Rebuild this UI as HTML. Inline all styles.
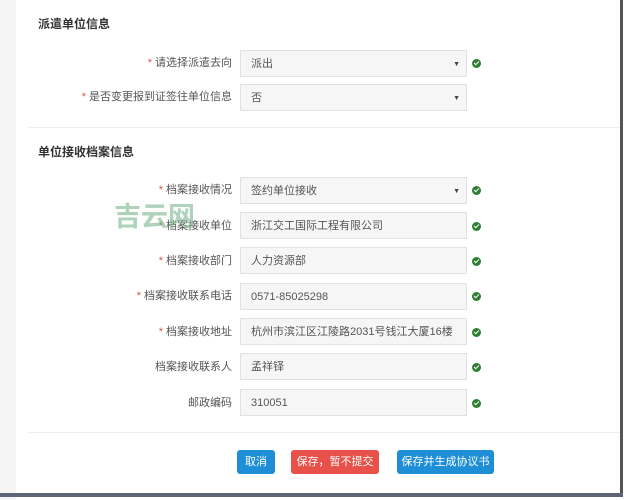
<!DOCTYPE html>
<html><head><meta charset="utf-8"><style>
body{margin:0;width:626px;height:500px;background:#fff;font-family:"Liberation Sans","Noto Sans CJK SC",sans-serif;position:relative;overflow:hidden}
.a{position:absolute}
.lbl{position:absolute;right:394px;font-size:11px;color:#555;line-height:28px;white-space:nowrap}
.lbl i{color:#d9534f;font-style:normal;margin-right:3px}
.inp{position:absolute;left:240px;height:27px;border:1px solid #e2e2e2;background:#f6f6f6;font-size:11px;color:#555;line-height:27px;padding-left:10px;box-sizing:border-box;width:227px}
.inp b{position:absolute;right:6px;top:0;font-size:7px;color:#444;font-weight:normal}
.ok{position:absolute;left:472px;width:9px;height:9px;border-radius:50%;background:#2e7d32}
.ok:after{content:"";position:absolute;left:2px;top:2px;width:4px;height:2px;border-left:1.5px solid #fff;border-bottom:1.5px solid #fff;transform:rotate(-45deg)}
h3{position:absolute;left:38px;margin:0;font-size:12px;font-weight:bold;color:#333}
.btn{position:absolute;top:450px;height:24px;line-height:24px;color:#fff;font-size:11px;text-align:center;border-radius:3px}
</style></head><body>
<div class="a" style="left:0;top:0;width:16px;height:500px;background:#f5f5f5"></div>
<div class="a" style="left:620px;top:0;width:3px;height:497px;background:#555"></div>
<div class="a" style="left:0;top:493px;width:623px;height:4px;background:#5d6676"></div>
<h3 style="top:15px">派遣单位信息</h3>
<h3 style="top:143px">单位接收档案信息</h3>
<div class="a" style="left:28px;top:127px;width:592px;height:1px;background:#eee"></div>
<div class="a" style="left:28px;top:432px;width:592px;height:1px;background:#eee"></div>

<div class="lbl" style="top:49px"><i>*</i>请选择派遣去向</div>
<div class="inp" style="top:50px">派出<b>▼</b></div><div class="ok" style="top:59px"></div>
<div class="lbl" style="top:83px"><i>*</i>是否变更报到证签往单位信息</div>
<div class="inp" style="top:84px">否<b>▼</b></div>

<div class="lbl" style="top:176px"><i>*</i>档案接收情况</div>
<div class="inp" style="top:177px">签约单位接收<b>▼</b></div><div class="ok" style="top:186px"></div>
<div class="lbl" style="top:212px"><i>*</i>档案接收单位</div>
<div class="inp" style="top:212px">浙江交工国际工程有限公司</div><div class="ok" style="top:222px"></div>
<div class="lbl" style="top:247px"><i>*</i>档案接收部门</div>
<div class="inp" style="top:247px">人力资源部</div><div class="ok" style="top:257px"></div>
<div class="lbl" style="top:282px"><i>*</i>档案接收联系电话</div>
<div class="inp" style="top:283px">0571-85025298</div><div class="ok" style="top:292px"></div>
<div class="lbl" style="top:318px"><i>*</i>档案接收地址</div>
<div class="inp" style="top:318px">杭州市滨江区江陵路2031号钱江大厦16楼</div><div class="ok" style="top:328px"></div>
<div class="lbl" style="top:353px">档案接收联系人</div>
<div class="inp" style="top:353px">孟祥铎</div><div class="ok" style="top:363px"></div>
<div class="lbl" style="top:389px">邮政编码</div>
<div class="inp" style="top:389px">310051</div><div class="ok" style="top:399px"></div>

<div class="a" style="left:114px;top:195px;font-size:27px;color:rgba(120,180,140,.6);font-weight:bold">吉云网</div>

<div class="btn" style="left:237px;width:38px;background:#1e8fd6">取消</div>
<div class="btn" style="left:291px;width:88px;background:#e8514a">保存，暂不提交</div>
<div class="btn" style="left:397px;width:97px;background:#1e8fd6">保存并生成协议书</div>
</body></html>
